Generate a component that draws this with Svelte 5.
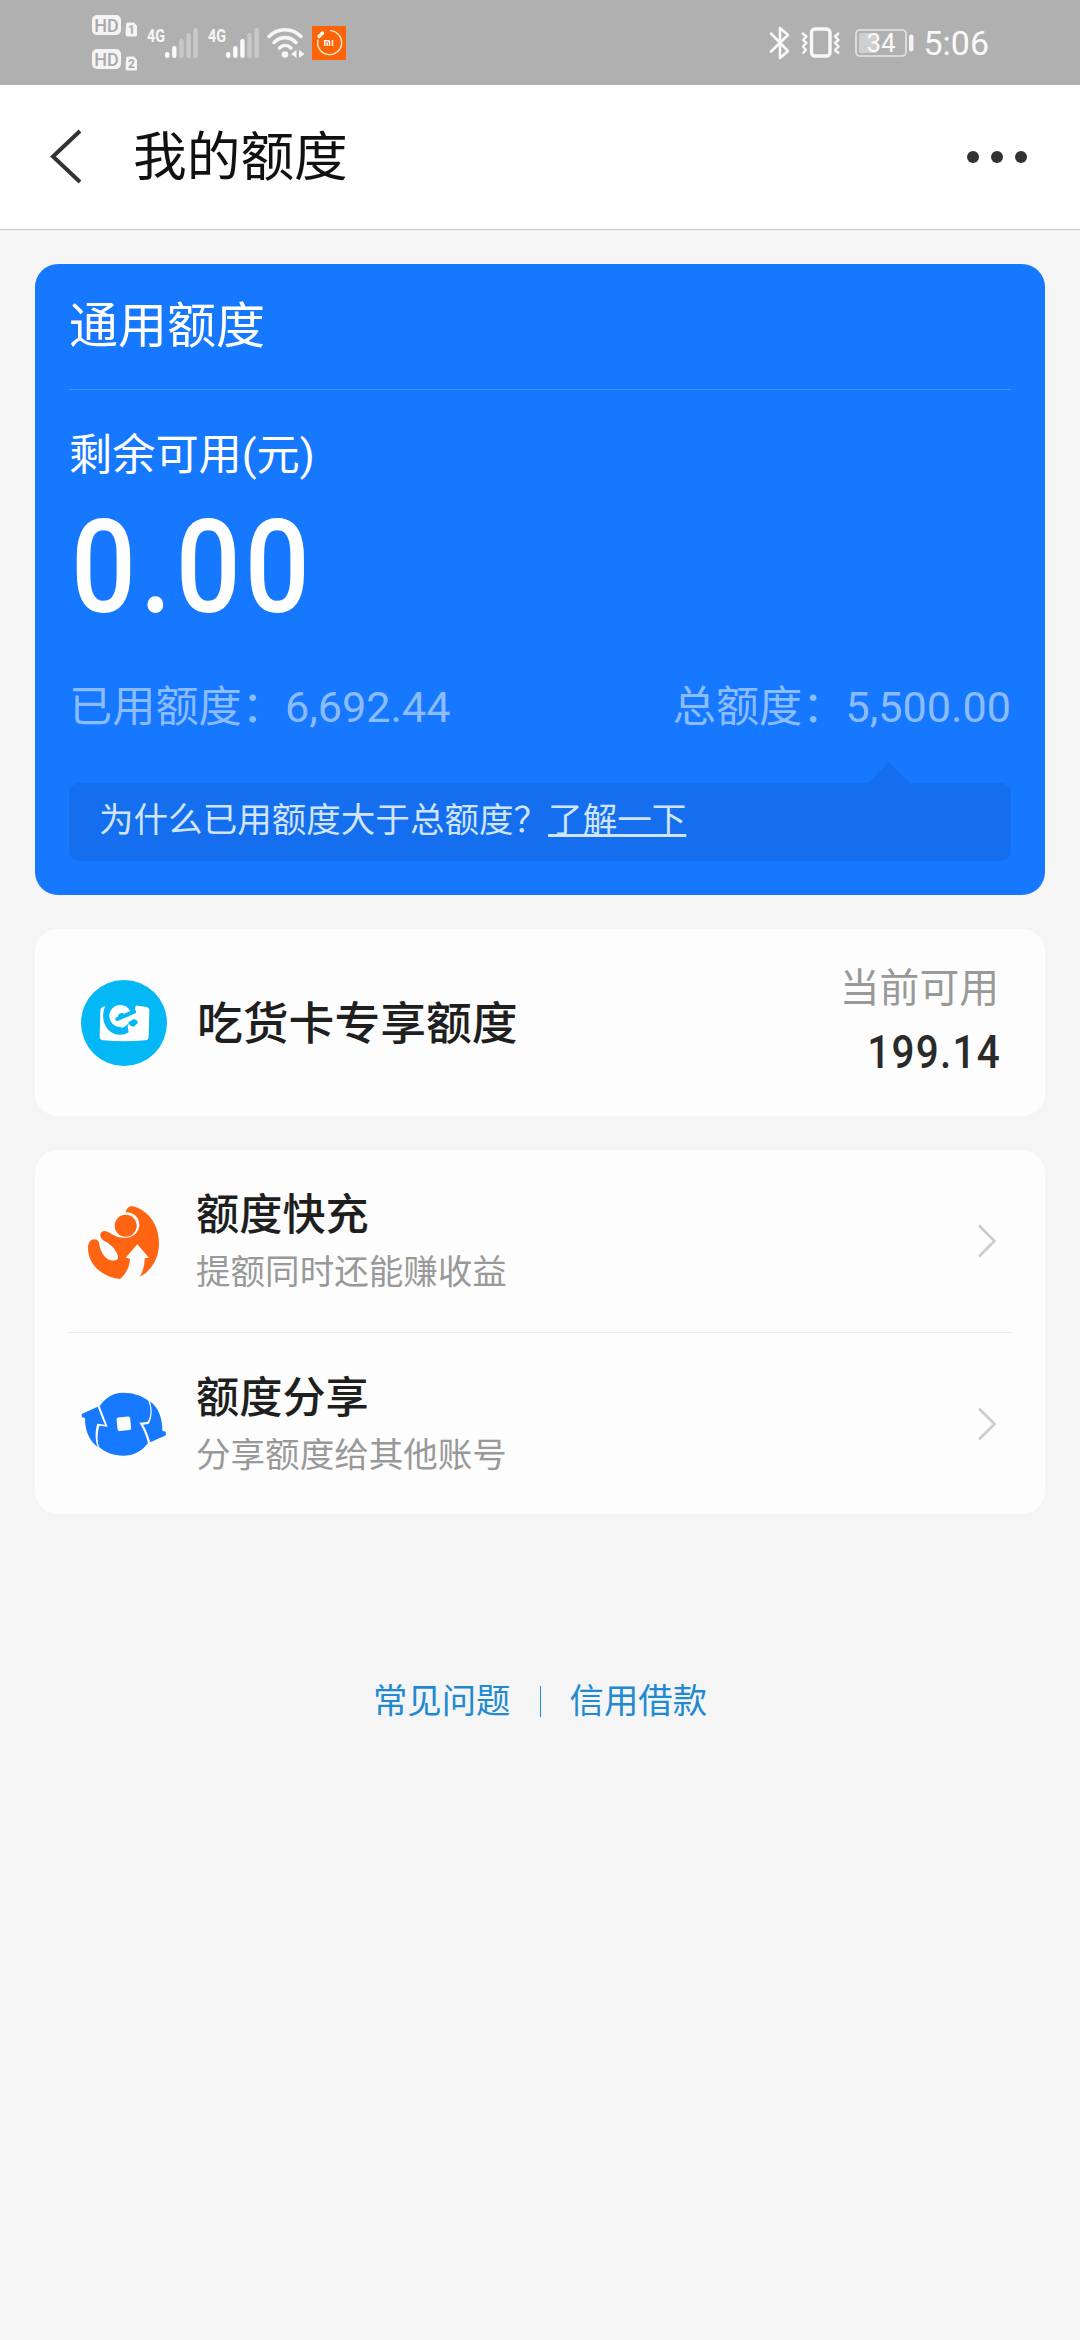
<script lang="ts">
  const signals = [2, 3];
  const bars = [6, 12, 19, 25, 30];

  const usage = [
    { label: '已用额度', value: '6,692.44' },
    { label: '总额度', value: '5,500.00' }
  ];

  const menu = [
    { id: 'boost', title: '额度快充', desc: '提额同时还能赚收益' },
    { id: 'share', title: '额度分享', desc: '分享额度给其他账号' }
  ];
</script>

<div class="page">
  <div class="status">
    <div class="status-left">
      <svg class="hd" width="46" height="64" viewBox="0 -4 46 64">
        {#each [1, 2] as n}
          <g transform="translate(0 {(n - 1) * 34})">
            <rect x="0" y="0" width="29" height="20" rx="5" fill="#f4f4f4" />
            <text x="14.5" y="16.500" class="hd-text" text-anchor="middle">HD</text>
            <path d="M34 9.500a2 2 0 0 1 2-2h6l3 3.500v9a1.500 1.500 0 0 1-1.500 1.500h-8a2 2 0 0 1-2-2z" fill="#f4f4f4" />
            <text x="39.500" y="19" class="sim-text" text-anchor="middle">{n}</text>
          </g>
        {/each}
      </svg>
      {#each signals as level}
        <svg class="signal" width="52" height="44" viewBox="0 -6 52 44">
          <text x="0" y="14.500" class="net-text" textLength="18" lengthAdjust="spacingAndGlyphs">4G</text>
          {#each bars as h, i}
            <rect x={18 + i * 7.1} y={31 - h} width="4.400" height={h} rx="2" fill={i < level ? '#fafafa' : '#c9c9c9'} />
          {/each}
        </svg>
      {/each}
      <svg class="wifi" width="38" height="32" viewBox="0 0 38 32">
        <g fill="none" stroke="#f6f6f6" stroke-width="3.600" stroke-linecap="round">
          <path d="M2 9.500C11 0.500 25 0.500 34 9.500" />
          <path d="M7 15.500C14 9 22.500 9 29 15.500" />
          <path d="M12.500 21C16 17.600 20.500 17.600 24 21" />
        </g>
        <circle cx="18" cy="27.500" r="3.300" fill="#f6f6f6" />
        <path d="M29.500 23v8l-5.500-4zM32 23v8l5.500-4z" fill="#f6f6f6" />
      </svg>
      <svg class="mi" width="34" height="34" viewBox="0 0 34 34">
        <rect width="34" height="34" fill="#ff6508" />
        <path d="M18 4.600a12 12 0 1 1-12 9" fill="none" stroke="#fff3dc" stroke-width="1.300" />
        <path d="M7 10.500L10.500 7" stroke="#fff" stroke-width="3.200" stroke-linecap="round" />
        <path d="M12.700 20v-5.300h3.300q1.500 0 1.500 1.500v3.800M15.200 16.500v3.500M20.500 14v6" fill="none" stroke="#fff" stroke-width="1.500" />
      </svg>
    </div>
    <div class="status-right">
      <svg width="22" height="34" viewBox="0 0 22 34">
        <path d="M2 7.500L19 25l-8 7V2l8 7L2 25.500" fill="none" stroke="#f8f8f8" stroke-width="2.600" stroke-linejoin="round" stroke-linecap="round" />
      </svg>
      <svg class="vibrate" width="42" height="34" viewBox="0 0 42 34">
        <rect x="11.500" y="3" width="18.500" height="27" rx="3.500" fill="none" stroke="#f8f8f8" stroke-width="3.400" />
        <path d="M2 7l4.500 3.500L3 14l3.500 3L3 20.500 6 24l-3.500 3.500M39 7l-4 3.500 3.500 3.500-3.500 3 3.500 3.500-3.500 3.500 4 3.500" fill="none" stroke="#f8f8f8" stroke-width="2.400" stroke-linejoin="round" />
      </svg>
      <svg class="battery" width="60" height="30" viewBox="0 0 60 30">
        <rect x="1" y="2" width="50" height="26" rx="4" fill="none" stroke="#e6e6e6" stroke-width="1.600" />
        <rect x="4" y="5" width="18" height="20" rx="1.500" fill="#cfcfcf" />
        <rect x="54" y="6.500" width="4.400" height="17" rx="2" fill="#f4f4f4" />
        <text x="26" y="23.500" class="battery-text" text-anchor="middle">34</text>
      </svg>
      <span class="time">5:06</span>
    </div>
  </div>

  <header class="navbar">
    <svg class="back" width="34" height="56" viewBox="0 0 34 56">
      <path d="M31 2L4 27.500l27 25.500" fill="none" stroke="#333" stroke-width="4" />
    </svg>
    <h1>我的额度</h1>
    <div class="more"><i></i><i></i><i></i></div>
  </header>

  <main>
    <section class="quota">
      <h2>通用额度</h2>
      <div class="remain">剩余可用(元)</div>
      <div class="amount"><span>0.00</span></div>
      <div class="usage">
        {#each usage as item}
          <span>{item.label}：{item.value}</span>
        {/each}
      </div>
      <div class="tip">为什么已用额度大于总额度？<a href="#help">了解一下</a></div>
    </section>

    <section class="card special">
      <svg class="icon" viewBox="63 60 258 258">
        <circle cx="192" cy="189" r="129" fill="#04b7f5" />
        <path d="M136 139Q121 141 121 153L119 230Q119 240 130 241Q192 247 256 241Q266 240 266 230L268 152Q268 142 256 140L222 136L206 150Z" fill="#fff" />
        <path d="M138 134C126 155 126 186 142 206C158 226 186 230 206 217L203 199L224 150L228 134Z" fill="#04b7f5" />
        <circle cx="181" cy="168" r="33" fill="#fff" />
        <path d="M206 190L188 204L176 198L222 158L234 170L232 184Z" fill="#fff" />
        <path d="M172 177L222 155" fill="none" stroke="#04b7f5" stroke-width="12" stroke-linecap="round" />
        <path d="M175 178Q170 162 184 159Q193 157 193 167" fill="#04b7f5" />
        <path d="M205 187L220 178Q234 178 233 190L221 200Q208 200 205 187Z" fill="#04b7f5" />
      </svg>
      <span class="special-title">吃货卡专享额度</span>
      <div class="available">
        <span class="available-label">当前可用</span>
        <span class="available-value">199.14</span>
      </div>
    </section>

    <section class="card menu">
      {#each menu as item}
        <div class="menu-row">
          {#if item.id === 'boost'}
            <svg class="icon" viewBox="63 54 258 258">
              <g fill="#ff6412">
                <circle cx="197" cy="137" r="33" />
                <path d="M197 97C200 84 208 77 219 79C268 92 297 138 297 190C297 236 275 271 240 290C250 270 254 254 254 235L267 233L232 193L197 233L210 236C208 263 198 282 180 297C125 291 84 252 84 205C84 188 92 178 103 178C114 179 117 185 118 194C122 215 134 236 152 241C169 244 177 239 173 226C168 208 150 190 133 183C121 176 117 163 125 156C133 150 144 155 156 163C188 183 233 175 238 137C239 112 221 97 197 97Z" />
              </g>
            </svg>
          {:else}
            <svg class="icon" viewBox="63 603 258 258">
              <g fill="#1779ff">
                <path d="M119 678C137 651 162 638 190 638C220 638 246 647 265 662C274 685 274 710 262 726L238 728C250 746 258 765 264 789C245 815 220 827 190 827C162 827 137 818 117 801C110 778 113 756 118 737L143 740C134 718 128 701 119 678Z" />
                <path d="M65 702L113 680C121 700 127 718 135 734L112 731C105 753 105 779 113 801C89 783 74 752 75 714L66 712Z" />
                <path d="M270 664C294 682 307 710 307 752L317 755L318 766L271 787C264 765 258 747 249 734L266 732C276 713 278 690 270 664Z" />
              </g>
              <rect x="171" y="711" width="41" height="41" rx="6" fill="#fff" transform="rotate(-6 191 731)" />
            </svg>
          {/if}
          <div class="menu-text">
            <div class="menu-title">{item.title}</div>
            <div class="menu-desc">{item.desc}</div>
          </div>
          <svg class="arrow" width="20" height="34" viewBox="0 0 20 34">
            <path d="M2 1.500L17.500 17 2 32.500" fill="none" stroke="#ccc" stroke-width="2.600" />
          </svg>
        </div>
      {/each}
    </section>

    <footer>
      <a href="#faq">常见问题</a>
      <i></i>
      <a href="#loan">信用借款</a>
    </footer>
  </main>
</div>

<style>
  :global(body) {
    background: #f5f5f5;
  }

  .page {
    width: 1080px;
    height: 2340px;
    background: #f5f5f5;
    color: #1f1f1f;
    font-family: Roboto, 'Noto Sans CJK SC', sans-serif;
    overflow: hidden;
  }

  .page * {
    box-sizing: border-box;
  }

  svg {
    display: block;
    flex: none;
    overflow: visible;
  }

  .status {
    display: flex;
    justify-content: space-between;
    height: 85px;
    padding: 0 91px 0 92px;
    background: #b0b0b0;
  }

  .status-left,
  .status-right {
    display: flex;
    align-items: center;
  }

  .signal {
    margin-left: 9px;
  }

  .wifi {
    margin-left: 7px;
  }

  .mi {
    margin-left: 7px;
  }

  .hd-text {
    font: 500 18px Roboto, sans-serif;
    fill: #a9a9a9;
  }

  .sim-text {
    font: 700 12px Roboto, sans-serif;
    fill: #a9a9a9;
  }

  .net-text {
    font: 700 19px Roboto, sans-serif;
    fill: #f6f6f6;
  }

  .vibrate {
    margin-left: 9px;
  }

  .battery {
    margin-left: 13px;
  }

  .battery-text {
    font: 400 26px Roboto, sans-serif;
    fill: #fafafa;
  }

  .time {
    margin-left: 8px;
    color: #fafafa;
    font-size: 34px;
    line-height: 40px;
  }

  .navbar {
    display: flex;
    align-items: center;
    height: 145px;
    padding: 0 53px 0 49px;
    background: #fff;
    border-bottom: 1px solid #c4c4c4;
  }

  h1 {
    flex: 1;
    margin: 0 0 0 50px;
    padding-top: 2px;
    color: #111;
    font-size: 53.700px;
    font-weight: 400;
    line-height: 80px;
  }

  .more {
    display: flex;
    gap: 12px;
  }

  .more i {
    width: 12px;
    height: 12px;
    border-radius: 50%;
    background: #333;
  }

  main {
    display: flex;
    flex-direction: column;
    gap: 34px;
    padding: 34px 35px;
  }

  .quota {
    height: 631px;
    padding: 0 34px;
    border-radius: 23px;
    background: #1677ff;
    color: #fff;
  }

  h2 {
    height: 126px;
    margin: 0;
    border-bottom: 1px solid #4593ff;
    font-size: 49px;
    font-weight: 400;
    line-height: 125px;
  }

  .remain {
    margin-top: 36px;
    font-size: 43.200px;
    line-height: 60px;
  }

  .amount {
    margin: 17px 0 0 2px;
    font-size: 130px;
    font-weight: 500;
    line-height: 130px;
    letter-spacing: 4.500px;
  }

  .amount span {
    display: inline-block;
    transform: scaleX(0.88);
    transform-origin: left;
  }

  .usage {
    display: flex;
    justify-content: space-between;
    margin-top: 45px;
    color: #8bbcff;
    font-size: 43.200px;
    line-height: 60px;
  }

  .tip {
    position: relative;
    height: 78px;
    margin-top: 45px;
    padding-left: 30px;
    border-radius: 11px;
    background: #146eed;
    color: #d0e4fc;
    font-size: 34.560px;
    line-height: 75px;
  }

  .tip::before {
    content: '';
    position: absolute;
    top: -21px;
    right: 101px;
    border: 21px solid transparent;
    border-top: 0;
    border-bottom-color: #146eed;
  }

  .tip a {
    color: inherit;
    text-decoration-thickness: 3px;
    text-underline-offset: 2px;
    text-decoration-skip-ink: none;
  }

  .card {
    border-radius: 23px;
    background: #fdfdfd;
  }

  .icon {
    width: 86px;
    height: 86px;
  }

  .special {
    display: flex;
    align-items: center;
    height: 187px;
    padding: 0 46px;
  }

  .special-title {
    flex: 1;
    margin: -5px 0 0 30px;
    font-size: 45.800px;
    font-weight: 500;
  }

  .available {
    display: flex;
    flex-direction: column;
    align-items: flex-end;
    margin-top: -6px;
  }

  .available-label {
    color: #999;
    font-size: 39.800px;
    line-height: 65px;
  }

  .available-value {
    margin-right: -2px;
    color: #2a2a2a;
    font-size: 46px;
    font-weight: 500;
    line-height: 62px;
    letter-spacing: 1.400px;
    transform: scaleX(0.88);
    transform-origin: right;
  }

  .menu {
    padding: 0 34px;
  }

  .menu-row {
    display: flex;
    align-items: center;
    height: 182px;
    padding: 0 14px 0 12px;
  }

  .menu-row + .menu-row {
    border-top: 1px solid #ececec;
  }

  .menu-text {
    flex: 1;
    margin-left: 29px;
    padding-top: 5px;
  }

  .menu-title {
    font-size: 43.200px;
    font-weight: 500;
    line-height: 58px;
  }

  .menu-desc {
    color: #999;
    font-size: 34.560px;
    line-height: 55px;
  }

  footer {
    display: flex;
    justify-content: center;
    align-items: center;
    gap: 29px;
    margin-top: 128px;
    font-size: 34.400px;
    line-height: 50px;
  }

  footer a {
    color: #1f8ad2;
    text-decoration: none;
  }

  footer i {
    width: 1px;
    height: 31px;
    background: #1f8ad2;
  }
</style>
